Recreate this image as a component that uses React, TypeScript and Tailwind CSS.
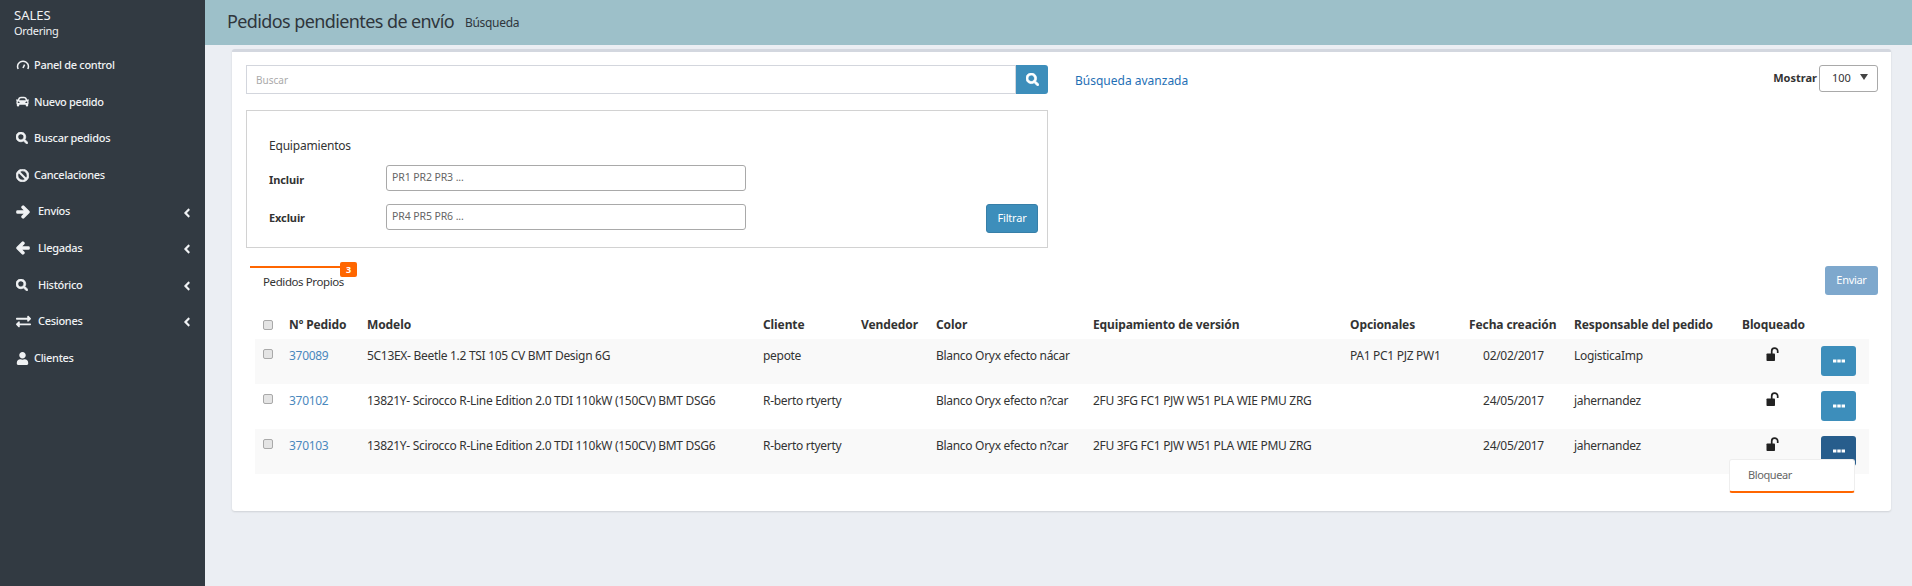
import { FaArrowLeft, FaArrowRight, FaBan, FaCar, FaExchangeAlt, FaSearch, FaUser, FaAngleLeft } from 'react-icons/fa'
import type { ReactNode } from 'react'

const FONT = 'font-["Noto_Sans",sans-serif]'

function Gauge() {
  return (
    <svg width="14" height="14" viewBox="0 0 14 14" fill="none" stroke="currentColor">
      <path d="M2.2 11a5.4 5.4 0 1 1 9.6 0" strokeWidth="1.5" />
      <path d="M7 10 8.6 6.6" strokeWidth="1.5" />
    </svg>
  )
}

function OpenLock() {
  return (
    <svg width="14" height="15" viewBox="0 0 14 15" className="mx-auto" fill="#222">
      <rect x="0.5" y="6.5" width="8.5" height="7.5" rx="0.8" />
      <path d="M5.7 7V4.2a3 3 0 0 1 6-0.2V6" fill="none" stroke="#222" strokeWidth="1.7" />
    </svg>
  )
}

function Dots() {
  return (
    <svg width="12" height="4" viewBox="0 0 12 4" fill="#fff">
      <rect x="0" y="0.5" width="3.4" height="3" />
      <rect x="4.3" y="0.5" width="3.4" height="3" />
      <rect x="8.6" y="0.5" width="3.4" height="3" />
    </svg>
  )
}

const MENU: { icon: ReactNode; label: string; sub?: boolean }[] = [
  { icon: <Gauge />, label: 'Panel de control' },
  { icon: <FaCar size={13} />, label: 'Nuevo pedido' },
  { icon: <FaSearch size={12} strokeWidth={30} />, label: 'Buscar pedidos' },
  { icon: <FaBan size={13} strokeWidth={30} />, label: 'Cancelaciones' },
  { icon: <FaArrowRight size={14} strokeWidth={50} />, label: 'Envíos', sub: true },
  { icon: <FaArrowLeft size={14} strokeWidth={50} />, label: 'Llegadas', sub: true },
  { icon: <FaSearch size={12} strokeWidth={30} />, label: 'Histórico', sub: true },
  { icon: <FaExchangeAlt size={15} />, label: 'Cesiones', sub: true },
  { icon: <FaUser size={13} />, label: 'Clientes' },
]

const ROWS = [
  { id: '370089', model: '5C13EX- Beetle 1.2 TSI 105 CV BMT Design 6G', client: 'pepote', color: 'Blanco Oryx efecto nácar', equip: '', opts: 'PA1 PC1 PJZ PW1', date: '02/02/2017', owner: 'LogisticaImp' },
  { id: '370102', model: '13821Y- Scirocco R-Line Edition 2.0 TDI 110kW (150CV) BMT DSG6', client: 'R-berto rtyerty', color: 'Blanco Oryx efecto n?car', equip: '2FU 3FG FC1 PJW W51 PLA WIE PMU ZRG', opts: '', date: '24/05/2017', owner: 'jahernandez' },
  { id: '370103', model: '13821Y- Scirocco R-Line Edition 2.0 TDI 110kW (150CV) BMT DSG6', client: 'R-berto rtyerty', color: 'Blanco Oryx efecto n?car', equip: '2FU 3FG FC1 PJW W51 PLA WIE PMU ZRG', opts: '', date: '24/05/2017', owner: 'jahernandez' },
]

function Check() {
  return <span className="block w-[10px] h-[10px] rounded-[2px] bg-[#e4e4e4] border border-[#a9a9a9]" />
}

function Th({ children, className }: { children?: ReactNode; className?: string }) {
  return <th className={`text-left font-bold tracking-[-0.1px] px-2 pt-[9px] h-[38px] align-middle whitespace-nowrap ${className ?? ''}`}>{children}</th>
}

function Td({ children, className }: { children?: ReactNode; className?: string }) {
  return <td className={`px-2 pt-[8px] align-top whitespace-nowrap tracking-[-0.3px] ${className ?? ''}`}>{children}</td>
}

export default function App() {
  return (
    <div className={`flex h-[586px] bg-[#ebeef3] text-[#333] text-[12px] overflow-hidden ${FONT}`}>
      <aside className="w-[205px] shrink-0 bg-[#323a42] text-[#f0f2f4]">
        <div className="pl-[14px] pt-[7px] h-[47px]">
          <div className="text-[13px] leading-[16px]">SALES</div>
          <div className="text-[11px] leading-[15px] tracking-[-0.3px]">Ordering</div>
        </div>
        <nav>
          {MENU.map(m => (
            <div key={m.label} className="h-[36.6px] flex items-center pl-[16px] pr-[16px]">
              <span className="w-[18px] flex justify-start">{m.icon}</span>
              <span className={`text-[11px] font-medium tracking-[-0.3px] ${m.sub ? 'ml-[4px]' : ''}`}>{m.label}</span>
              {m.sub && <FaAngleLeft size={14} className="ml-auto mr-[-5px] mt-[2px]" />}
            </div>
          ))}
        </nav>
      </aside>

      <main className="flex-1 min-w-0">
        <header className="h-[45px] bg-[#9dc0c9] flex items-center pl-[22px] pb-[2px]">
          <h1 className="text-[18px] tracking-[-0.6px] text-[#2f363c]">Pedidos pendientes de envío</h1>
          <span className="ml-[11px] text-[12px] tracking-[-0.3px] text-[#2f363c] mt-[2px]">Búsqueda</span>
        </header>

        <section className="mt-[4px] ml-[27px] mr-[21px] h-[462px] bg-white border-t-[3px] border-[#d3d7df] rounded-[3px] shadow-[0_1px_2px_rgba(0,0,0,0.12)] pl-[14px] pr-[13px] pt-[13px]">
          <div className="flex items-start">
            <div className="w-[802px] shrink-0">
              <div className="flex h-[29px]">
                <div className="flex-1 border border-[#d3d6dd] flex items-center pl-[9px] pt-[2px] text-[10px] text-[#aaa]">Buscar</div>
                <button type="button" className="w-[32px] bg-[#3d8ebb] text-white rounded-r-[3px] flex items-center justify-center">
                  <FaSearch size={13} strokeWidth={30} />
                </button>
              </div>
              <div className="mt-[16px] h-[138px] border border-[#d2d2d2] pl-[22px] pr-[9px] pt-[26px] relative">
                <div className="text-[12px] tracking-[-0.2px] leading-[18px]">Equipamientos</div>
                <div className="flex items-center mt-[10px] h-[26px]">
                  <label className="w-[117px] font-bold text-[11px] tracking-[-0.1px] pt-[4px]">Incluir</label>
                  <div className="w-[360px] h-[26px] border border-[#a9a9a9] rounded-[3px] flex items-center pl-[5px] text-[10.5px] tracking-[-0.1px] text-[#666]">PR1 PR2 PR3 ...</div>
                </div>
                <div className="flex items-center mt-[13px] h-[26px]">
                  <label className="w-[117px] font-bold text-[11px] tracking-[-0.1px] pt-[3px]">Excluir</label>
                  <div className="w-[360px] h-[26px] border border-[#a9a9a9] rounded-[3px] flex items-center pl-[5px] text-[10.5px] tracking-[-0.1px] text-[#666]">PR4 PR5 PR6 ...</div>
                  <button type="button" className="ml-auto mt-[0px] w-[52px] h-[29px] bg-[#3d8ebb] border border-[#377fa8] rounded-[3px] text-white text-[11px] tracking-[-0.2px] self-start">Filtrar</button>
                </div>
              </div>
            </div>
            <a className="ml-[27px] mt-[7px] text-[12px] text-[#1f6fb5]">Búsqueda avanzada</a>
            <div className="ml-auto flex items-center">
              <span className="font-bold text-[11px] mr-[2px]">Mostrar</span>
              <div className="w-[59px] h-[27px] border border-[#a9a9a9] rounded-[3px] flex items-center pl-[12px] pr-[9px] text-[11px] justify-between">
                100 <span className="w-0 h-0 mb-[3px] border-x-[4px] border-x-transparent border-t-[6px] border-t-[#444]" />
              </div>
            </div>
          </div>

          <div className="flex justify-between mt-[18px] h-[47px]">
            <div className="relative w-[108px] ml-[4px]">
              <div className="h-[2px] w-[90px] bg-[#ff6600]" />
              <span className="absolute left-[90px] top-[-4px] w-[17px] h-[15px] bg-[#ff6600] rounded-[2px] text-white text-[9px] font-bold flex items-center justify-center">3</span>
              <div className="pl-[13px] mt-[6px] text-[11.5px] tracking-[-0.4px] leading-[16px]">Pedidos Propios</div>
            </div>
            <button type="button" className="w-[53px] h-[29px] bg-[#7ea8cd] rounded-[3px] text-white text-[11px] tracking-[-0.3px]">Enviar</button>
          </div>

          <div className="relative w-[1614px] ml-[9px] mt-[-12px]">
            <table className="w-full table-fixed border-collapse">
              <colgroup>
                <col className="w-[26px]" />
                <col className="w-[78px]" />
                <col className="w-[396px]" />
                <col className="w-[98px]" />
                <col className="w-[75px]" />
                <col className="w-[157px]" />
                <col className="w-[257px]" />
                <col className="w-[119px]" />
                <col className="w-[105px]" />
                <col className="w-[168px]" />
                <col className="w-[78px]" />
                <col />
              </colgroup>
              <thead>
                <tr>
                  <Th><Check /></Th>
                  <Th>Nº Pedido</Th>
                  <Th>Modelo</Th>
                  <Th>Cliente</Th>
                  <Th>Vendedor</Th>
                  <Th>Color</Th>
                  <Th>Equipamiento de versión</Th>
                  <Th>Opcionales</Th>
                  <Th>Fecha creación</Th>
                  <Th>Responsable del pedido</Th>
                  <Th>Bloqueado</Th>
                  <Th />
                </tr>
              </thead>
              <tbody>
                {ROWS.map((r, i) => (
                  <tr key={r.id} className={`h-[45px] ${i % 2 === 0 ? 'bg-[#f9f9f9]' : ''}`}>
                    <Td className="!pt-[10px]"><Check /></Td>
                    <Td className="text-[#4a88bd]">{r.id}</Td>
                    <Td>{r.model}</Td>
                    <Td>{r.client}</Td>
                    <Td />
                    <Td>{r.color}</Td>
                    <Td>{r.equip}</Td>
                    <Td>{r.opts}</Td>
                    <Td className="text-center">{r.date}</Td>
                    <Td>{r.owner}</Td>
                    <Td><OpenLock /></Td>
                    <td className="align-top pt-[7px] pl-[9px]">
                      <button type="button" className={`w-[35px] h-[30px] rounded-[3px] flex items-center justify-center ${i === 2 ? 'bg-[#275d8c]' : 'bg-[#3d8ebb]'}`}>
                        <Dots />
                      </button>
                    </td>
                  </tr>
                ))}
              </tbody>
            </table>
            <div className="absolute right-[14px] top-[158px] w-[126px] h-[34px] bg-white border border-[#eee] border-b-[2px] border-b-[#ff6600] rounded-[3px] pl-[18px] flex items-center text-[11px] tracking-[-0.4px] text-[#666]">
              Bloquear
            </div>
          </div>
        </section>
      </main>
    </div>
  )
}
